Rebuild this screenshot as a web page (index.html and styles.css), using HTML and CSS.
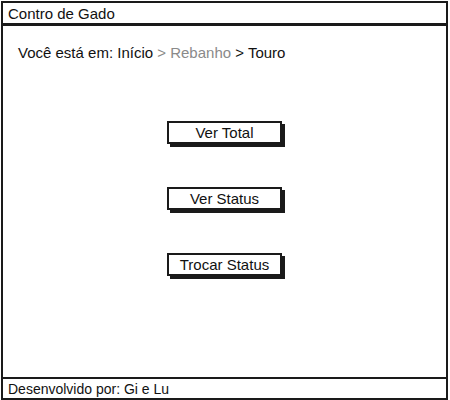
FILE: index.html
```html
<!DOCTYPE html>
<html lang="pt">
<head>
<meta charset="utf-8">
<title>Contro de Gado</title>
<link rel="stylesheet" href="styles.css">
</head>
<body>
<div class="app">
  <div class="titlebar">Contro de Gado</div>
  <div class="main">
    <div class="crumbs">Você está em: Início <span class="muted">&gt; Rebanho</span> &gt; Touro</div>
    <div class="actions">
      <button class="btn">Ver Total</button>
      <button class="btn">Ver Status</button>
      <button class="btn">Trocar Status</button>
    </div>
  </div>
  <div class="footer">Desenvolvido por: Gi e Lu</div>
</div>
</body>
</html>
```
FILE: styles.css
```css
* { box-sizing: border-box; }
html, body { margin: 0; padding: 0; background: #fff; }
body {
  width: 450px;
  height: 400px;
  font-family: "Liberation Sans", Arial, sans-serif;
  font-size: 14px;
  color: #111;
}
.app {
  display: flex;
  flex-direction: column;
  width: 447px;
  height: 399px;
  margin: 1px 0 0 1px;
}
.titlebar {
  height: 25px;
  border: 2px solid #1a1a1a;
  border-bottom-width: 3px;
  padding: 2px 0 0 5px;
  font-size: 15px;
  line-height: 17px;
}
.main {
  flex: 1;
  border-left: 2px solid #1a1a1a;
  border-right: 2px solid #1a1a1a;
  padding: 18px 0 0 15px;
  display: flex;
  flex-direction: column;
}
.crumbs { font-size: 15px; line-height: 17px; }
.muted { color: #8a8a8a; }
.actions {
  display: flex;
  flex-direction: column;
  align-items: center;
  gap: 43px;
  margin-top: 60px;
  margin-right: 15px;
}
.btn {
  width: 115px;
  height: 23px;
  border: 2px solid #1a1a1a;
  background: #fff;
  box-shadow: 3px 3px 0 #1a1a1a;
  font-family: inherit;
  font-size: 15px;
  color: #111;
  padding: 0;
  line-height: 17px;
}
.footer {
  height: 23px;
  border: 2px solid #1a1a1a;
  padding: 2px 0 0 5px;
  line-height: 16px;
}
```
